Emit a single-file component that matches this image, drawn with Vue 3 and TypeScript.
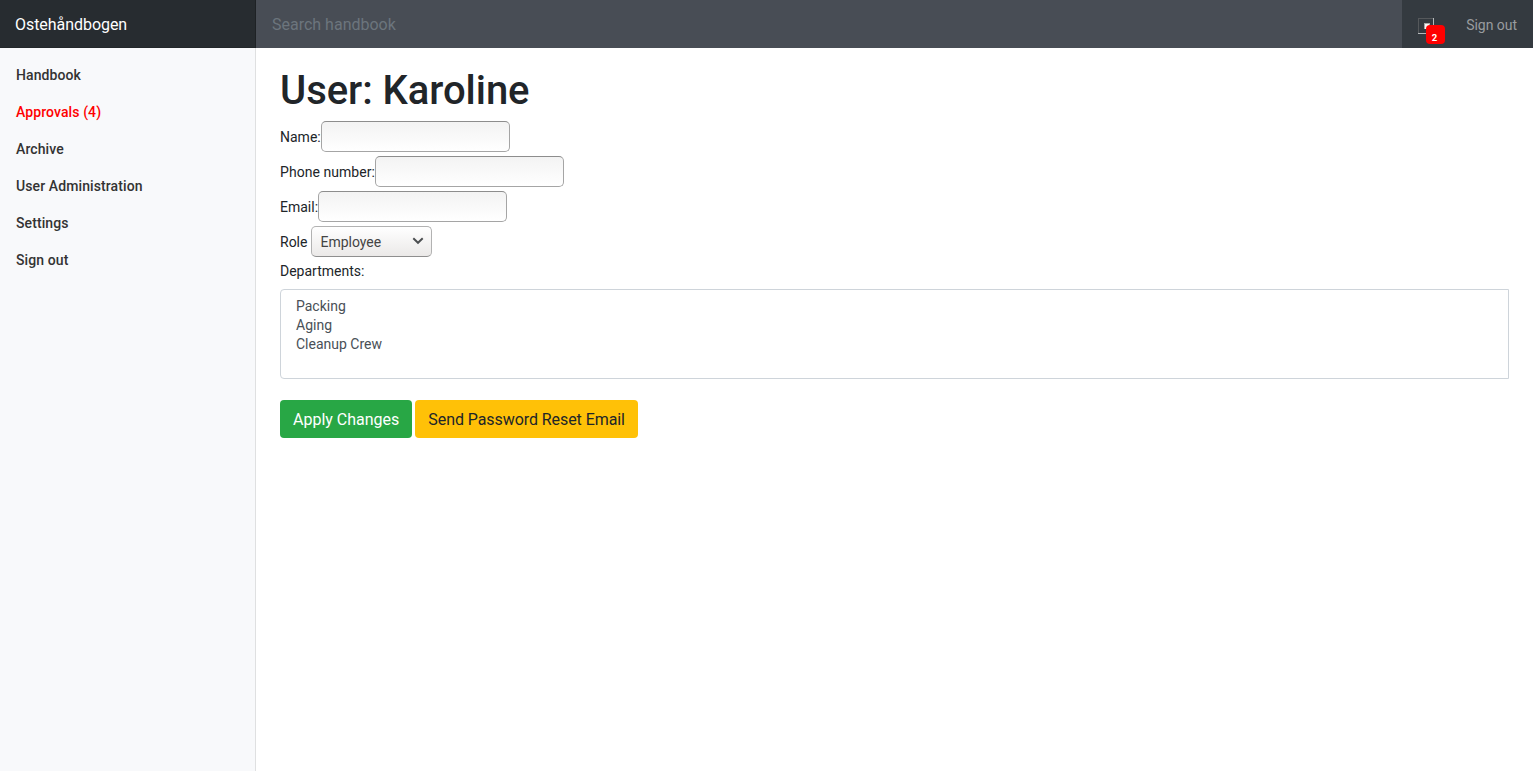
<script setup lang="ts">
import { ref } from 'vue'

interface NavItem {
  label: string
  alert?: boolean
}

const navItems: NavItem[] = [
  { label: 'Handbook' },
  { label: 'Approvals (4)', alert: true },
  { label: 'Archive' },
  { label: 'User Administration' },
  { label: 'Settings' },
  { label: 'Sign out' },
]
const fields = ref([
  { id: 'name', label: 'Name:', value: '' },
  { id: 'phone', label: 'Phone number:', value: '' },
  { id: 'email', label: 'Email:', value: '' },
])
const role = ref('Employee')
const departments = ['Packing', 'Aging', 'Cleanup Crew']
const search = ref('')
</script>

<template>
  <div class="page">
    <header class="topbar">
      <a class="brand">Ostehåndbogen</a>
      <input v-model="search" class="search" type="text" placeholder="Search handbook" />
      <div class="account">
        <span class="notice">
          <svg width="16" height="16" viewBox="0 0 16 16" shape-rendering="crispEdges">
            <path d="M0.5 16V0.5H16" fill="none" stroke="#55585b" />
            <path d="M0 15.5H15.5V0" fill="none" stroke="#b5b8ba" />
            <rect x="6" y="5" width="6" height="6" fill="#a8a8a8" />
            <rect x="7" y="6" width="4" height="5" fill="#f4f4f4" />
          </svg>
          <span class="badge">2</span>
        </span>
        <a class="signout">Sign out</a>
      </div>
    </header>
    <div class="body">
      <nav class="sidebar">
        <a v-for="item in navItems" :key="item.label" class="nav-link" :class="{ alert: item.alert }">{{ item.label }}</a>
      </nav>
      <main class="content">
        <h1>User: Karoline</h1>
        <div v-for="field in fields" :key="field.id" class="row">
          <label :for="field.id" :class="field.id">{{ field.label }}</label>
          <input :id="field.id" v-model="field.value" class="text" type="text" />
        </div>
        <div class="row role">
          <label>Role</label>
          <button class="select" type="button">
            <span>{{ role }}</span>
            <svg width="12" height="8" viewBox="0 0 12 8">
              <path d="M1.3 1.2L6 5.8L10.7 1.2" fill="none" stroke="#4c4f51" stroke-width="1.9" />
            </svg>
          </button>
        </div>
        <div class="dept-label">Departments:</div>
        <ul class="listbox">
          <li v-for="d in departments" :key="d">{{ d }}</li>
        </ul>
        <div class="actions">
          <button class="btn apply" type="button">Apply Changes</button>
          <button class="btn reset" type="button">Send Password Reset Email</button>
        </div>
      </main>
    </div>
  </div>
</template>

<style>
body {
  margin: 0;
  background: #fff;
}
</style>

<style scoped>
.page {
  display: flex;
  flex-direction: column;
  height: 100vh;
  overflow: hidden;
  font-family: Roboto, "Liberation Sans", sans-serif;
  font-size: 14px;
  line-height: 21px;
  color: #212529;
}
.page * {
  box-sizing: border-box;
}
button,
input {
  font-family: inherit;
  margin: 0;
}
.topbar {
  display: flex;
  flex: none;
  height: 48px;
  background: #343a40;
}
.brand {
  width: 256px;
  padding: 13px 15px 11px;
  font-size: 16px;
  line-height: 24px;
  letter-spacing: -0.05px;
  color: #fff;
  background: #272c30;
  box-shadow: inset -1px 0 0 #1e2225, inset 0 -1px 0 #22272a;
}
.search {
  flex: 1;
  min-width: 0;
  padding: 13px 16px 11px;
  border: 0;
  outline: 0;
  font-size: 16px;
  line-height: 24px;
  color: #fff;
  background: #484d55;
}
.search::placeholder {
  color: #6c757d;
  opacity: 1;
}
.account {
  display: flex;
  align-items: flex-start;
  justify-content: space-between;
  width: 131px;
  padding: 0 16px;
}
.notice {
  position: relative;
  width: 16px;
  height: 16px;
  margin-top: 18px;
}
.notice svg {
  display: block;
}
.badge {
  position: absolute;
  left: 8px;
  top: 7px;
  width: 19px;
  height: 19px;
  padding-top: 3px;
  padding-right: 2px;
  border-radius: 4px;
  background: #f00;
  color: #fff;
  font-size: 9.5px;
  font-weight: 700;
  line-height: 19px;
  text-align: center;
}
.signout {
  margin-top: 15px;
  letter-spacing: -0.03px;
  color: #999c9f;
}
.body {
  display: flex;
  flex: 1;
  min-height: 0;
}
.sidebar {
  display: flex;
  flex-direction: column;
  width: 256px;
  padding-top: 9px;
  background: #f8f9fb;
  box-shadow: inset -1px 0 0 #dfe0e1;
}
.nav-link {
  padding: 8px 16px;
  font-weight: 500;
  letter-spacing: 0.1px;
  color: #333;
}
.nav-link.alert {
  color: #f00;
}
.content {
  flex: 1;
  min-width: 0;
  padding: 19px 24px 0;
}
h1 {
  margin: 0 0 6px;
  font-size: 40px;
  line-height: 48px;
  font-weight: 500;
  letter-spacing: -0.04px;
}
.row {
  display: flex;
  align-items: center;
  height: 31px;
  margin-bottom: 4px;
}
.row label {
  padding-top: 2px;
}
.row .phone {
  letter-spacing: 0.05px;
}
.text {
  width: 189px;
  height: 31px;
  padding: 4px 8px;
  border: 1px solid #a5a5a5;
  border-top-color: #8d8d8d;
  border-radius: 5px;
  background: linear-gradient(#f3f3f3, #fff);
  font-size: 14px;
}
.role {
  gap: 4px;
}
.select {
  display: flex;
  align-items: center;
  justify-content: space-between;
  width: 121px;
  height: 31px;
  padding: 0 7px 0 8px;
  border: 1px solid #b2b2b2;
  border-bottom-color: #8f8f8f;
  border-radius: 5px;
  background: linear-gradient(#fff, #ebe9e8);
  font-size: 14px;
  color: #444;
}
.select svg {
  margin-bottom: 1px;
}
.listbox {
  height: 90px;
  margin: 7px 0 21px;
  padding: 7px 15px;
  border: 1px solid #ced4da;
  border-radius: 4px 0 0 4px;
  list-style: none;
  color: #495057;
  line-height: 19px;
}
.actions {
  display: flex;
  gap: 3px;
}
.btn {
  height: 38px;
  padding: 2px 13px 0;
  border: 0;
  border-radius: 4px;
  font-size: 16px;
  line-height: 36px;
  white-space: nowrap;
}
.apply {
  background: #28a745;
  color: #fff;
}
.reset {
  background: #ffc107;
  color: #212529;
  letter-spacing: -0.07px;
}
</style>
